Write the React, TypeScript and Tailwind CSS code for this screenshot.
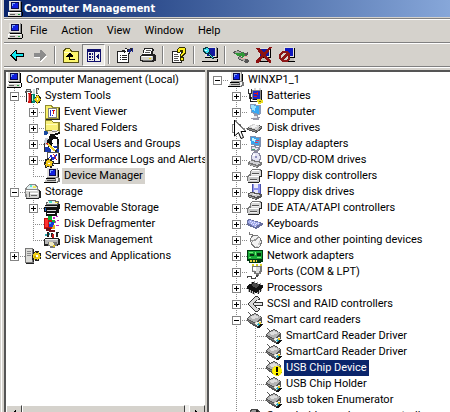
import React from 'react';

type Layer = [string, string];

// every icon is a stack of filled paths on a 16x16 grid
const icons: Record<string, Layer[]> = {
  computer: [
    ['#8c8c8c', 'M2 0h12v10h-12z'],
    ['#e4e2dc', 'M2 0h11v9h-11z'],
    ['#0a0a50', 'M4 1h8v7h-8z'],
    ['#1020e0', 'M5 2h6v5h-6z'],
    ['#7fa8ff', 'M5 2h3v1h-2v2h-1z'],
    ['#000', 'M14 1h1v9h-1zM3 10h12v1h1v4h-1v1h-14v-1h14v-4h-12z'],
    ['#d6d4ce', 'M1 11h13v4h-13z'],
    ['#fff', 'M1 11h13v1h-12v2h-1z'],
    ['#5c5c5c', 'M3 13h5v1h-5z'],
    ['#20a040', 'M11 13h2v1h-2z'],
  ],
  device: [
    ['#8c8c8c', 'M3 0h11v10h-11z'],
    ['#e4e2dc', 'M3 0h10v9h-10z'],
    ['#0a0a50', 'M5 1h7v7h-7z'],
    ['#1020e0', 'M6 2h5v5h-5z'],
    ['#7fa8ff', 'M6 2h3v1h-2v2h-1z'],
    ['#000', 'M14 2h1v8h-1zM2 10h12v1h-12zM0 14h12v1h-12z'],
    ['#c9c8c4', 'M2 11h11v1h-1v2h-11v-2h1z'],
    ['#555', 'M3 12h9v1h-9z'],
    ['#777', 'M12 9h3v1h1v4h-2v1h-2v-3h-1v-2h1z'],
    ['#f4f4f4', 'M12 10h2v3h-1v1h-1z'],
  ],
  tools: [
    ['#555', 'M1 1h5v2h1v2h-2v-1h-3v1h-2v-2h1zM11 0h3v2h-1v4h-2z'],
    ['#c8d8d8', 'M2 2h3v1h-3zM8 1h2v5h-2zM12 1h1v4h-1z'],
    ['#d21414', 'M3 5h3v10h-3z'],
    ['#ff9090', 'M3 6h1v7h-1z'],
    ['#008c78', 'M7 6h3v9h-3z'],
    ['#a0ffe0', 'M7 7h1v6h-1z'],
    ['#222', 'M1 5h1v9h-1zM6 6h1v9h-1zM11 7h3v1h1v1h1v4h-1v2h-4v-1h-1v-5h1z'],
    ['#e8cc10', 'M11 8h3v2h1v3h-1v1h-3v-1h-1v-3h1zM9 11h2v1h-2zM12 7h1v1h-1zM12 14h1v2h-1zM15 11h1v1h-1z'],
    ['#fff', 'M12 10h1v2h-1z'],
  ],
  events: [
    ['#8f8a30', 'M1 1h6l2 2h7v13h-15z'],
    ['#f8f06a', 'M2 2h5l1 2h6v10h-12z'],
    ['#222', 'M15 4h1v12h-14v-1h13z'],
    ['#808080', 'M4 4h9v10h-9z'],
    ['#fff', 'M5 5h7v8h-7z'],
    ['#2030d0', 'M6 6h1v6h-1zM8 6h1v1h-1zM8 11h1v1h-1z'],
    ['#e01010', 'M9 6h2v1h-1v3h-1z'],
  ],
  shared: [
    ['#8f8a30', 'M1 0h6l2 2h7v10h-15z'],
    ['#f8f078', 'M2 1h5l2 2h5v7h-12z'],
    ['#fffcb8', 'M2 4h11v1h-11z'],
    ['#1848a0', 'M0 11h3v4h-3zM3 12h3v2h-3z'],
    ['#111', 'M6 14h5v-1h3v-1h2v2h-2v1h-3v1h-5z'],
    ['#f0e8dc', 'M4 11h4v-1h5v1h2v1h-3v1h-3v1h-5z'],
    ['#888', 'M8 11h5v1h-5z'],
  ],
  users: [
    ['#111', 'M5 0h7v1h2v2h1v6h-2v-4h-3v3h-2v3h-4v-3h-1v-5h2z'],
    ['#fff', 'M9 3h4v4h-1v2h-3v-2h-1v-3h1z'],
    ['#c4ccd8', 'M1 2h3v2h-1v5h-3v-5h1z'],
    ['#333', 'M0 7h1v8h2v1h-3zM13 8h2v7h-2z'],
    ['#f2d32a', 'M2 7h2l7 6v2h-2z'],
    ['#d42a20', 'M2 7h2v2h-1z'],
    ['#1838b0', 'M1 11h3l3 3v2h-6zM9 10h4v2h-3zM12 13h3v3h-3z'],
    ['#222', 'M11 14h2v2h-2z'],
  ],
  perf: [
    ['#555', 'M3 0h12v12h-12z'],
    ['#fff', 'M4 1h10v10h-10z'],
    ['#2030d8', 'M5 6l2-4 2 4 3-4 1 1-4 6-2-4z'],
    ['#e02020', 'M9 2h1l3 6h-1z'],
    ['#222', 'M1 7h2v-1h2v1h2v-1h1v3h2v2h-1v2h1v1h-2v2h-2v-1h-3v1h-2v-3h-1z'],
    ['#f0c818', 'M3 8h2v-1h1v2h2v1h1v1h-1v3h-2v1h-1v-1h-2v1h-1v-2h-1v-1h1v-3h1z'],
    ['#fff', 'M4 11h2v1h-2z'],
    ['#111', 'M14 12h-4v-1h5v-10h1v11z'],
  ],
  storage: [
    ['#888', 'M4 0h6l3 2v5h-13v-3z'],
    ['#dfeeee', 'M4 1h5l3 2v3h-10v-2z'],
    ['#60e8d0', 'M5 1h2v2h-2z'],
    ['#f0ec60', 'M8 2h3v2h-3z'],
    ['#222', 'M14 6l2 2v6h-2v1h-13v-1h13z'],
    ['#888', 'M0 5h14v9h-13l-1-1z'],
    ['#d5d5d2', 'M1 6h11l2 2v5h-1v1h-11v-4h-1z'],
    ['#fff', 'M1 6h11v1h-11zM5 9h8v1h-8z'],
    ['#666', 'M6 11h6v1h-6zM4 8h1v5h-1z'],
  ],
  removable: [
    ['#666', 'M4 0h8v1h3v4h-13v-3h2z'],
    ['#e8f0e8', 'M4 1h7v1h2v2h-10v-1h1z'],
    ['#48dcc8', 'M5 1h3v2h-3z'],
    ['#f0e040', 'M11 2h3v1h-3z'],
    ['#111', 'M1 5h13v-1h2v5h-1v4h-2v3h-11v-4h-2v-5h1z'],
    ['#d0d0d0', 'M1 6h12v1h-12zM3 10h9v1h-9z'],
    ['#fff', 'M3 13h8v1h-8z'],
    ['#1060d0', 'M1 8h1v3h-1z'],
  ],
  defrag: [
    ['#c01010', 'M0 2h6l2 2v9h-8z'],
    ['#ff3030', 'M1 3h3v8h-3z'],
    ['#10b030', 'M4 0h4v4h-4zM8 4h3v3h-3z'],
    ['#1838d8', 'M5 6h5v5h-5z'],
    ['#30c8e8', 'M5 6h2v2h-2z'],
    ['#c020c0', 'M9 1h2v2h-2zM12 0h2v1h-2zM13 4h2v1h-2zM11 5h1v2h-1z'],
    ['#701018', 'M2 12h5v2h4v2h-6v-1h-3z'],
    ['#e0b020', 'M9 9h2v4h-3v-2h1z'],
    ['#c020c0', 'M12 9h3v1h-3z'],
  ],
  diskmgmt: [
    ['#222', 'M3 0h2v5h-2zM7 1h2v4h-2zM12 0h3v1h-1v4h-2z'],
    ['#c01818', 'M8 2h2v4h-2z'],
    ['#30a8b0', 'M1 2h2v2h-2zM5 1h1v2h-1z'],
    ['#222', 'M1 6h14v1h1v6h-2v1h-14v-7h1z'],
    ['#b8b8b8', 'M1 7h13v5h-13z'],
    ['#efefef', 'M1 7h13v1h-13z'],
    ['#777', 'M4 10h9v4h-2v2h-5v-2h-2z'],
    ['#f0eac0', 'M5 10h4v1h1v3h-4v-1h-1z'],
    ['#e0c020', 'M9 13h2v2h-2z'],
  ],
  services: [
    ['#777', 'M0 0h8v1h1v14h-9z'],
    ['#dcdcd8', 'M1 1h6v13h-6z'],
    ['#888', 'M2 3h4v1h-4zM2 5h4v1h-4zM2 7h4v1h-4z'],
    ['#222', 'M8 1h1v13h-1zM1 15h8v1h-8zM8 4h2v-1h4v2h2v6h-2v2h-4v-1h-3v-5h1z'],
    ['#f0d018', 'M9 5h1v-1h1v1h2v-1h1v2h1v2h1v1h-1v2h-2v1h-1v-1h-2v1h-1v-2h-1v-4h1z'],
    ['#fff', 'M11 7h2v2h-2z'],
    ['#c8a800', 'M9 8h2v2h-2z'],
  ],
  battery: [
    ['#333', 'M1 1h1v4h2v-4h1v5h-1v3h2v2h-4v-5h-1zM5 13h5v1h-5z'],
    ['#888', 'M5 2h10v10h-10z'],
    ['#1c28c8', 'M6 3h7v8h-7z'],
    ['#d8d8d8', 'M7 0h2v2h-2zM12 0h2v2h-2z'],
    ['#e01818', 'M7 5h3v1h-3zM10 4h1v3h-1zM7 8h3v1h-3z'],
    ['#111', 'M14 2h1v10h-9v-1h8zM3 9h1v4h2v1h-3z'],
    ['#eadc20', 'M10 11h4v1h2v3h-2v1h-3v-2h-1z'],
    ['#776c00', 'M12 13h2v1h-2z'],
  ],
  monitor: [
    ['#8899b8', 'M3 0l11 1v9l-2 1-8-2z'],
    ['#38a8f4', 'M4 1l8 1v8l-7-2z'],
    ['#9ee4ff', 'M4 1l5 1-1 5-3-1z'],
    ['#99a', 'M7 10h4v3h2v1h-1v2h-6v-1h-2v-1h3z'],
    ['#e8e8f0', 'M7 12h3v2h-4z'],
  ],
  disk: [
    ['#555', 'M0 8l6-4 9 2v3l-6 4-9-3z'],
    ['#d4d4d4', 'M1 7l5-3 8 2-5 4z'],
    ['#f4f4f4', 'M3 7l4-2 4 1-4 2z'],
    ['#888', 'M1 8l8 3v1l-8-3z'],
    ['#aaa', 'M10 9l4-2v1l-4 3z'],
  ],
  display: [
    ['#8090b0', 'M3 0l11 1v10l-10-2z'],
    ['#38a4ec', 'M4 1l8 1v7l-8-1z'],
    ['#c6f4ff', 'M5 2l4 1-1 3-3-1z'],
    ['#d43c64', 'M9 4h3v1h-3zM8 6h3v1h-3z'],
    ['#8c8c9c', 'M4 10l9 1v3l-3 2-6-1z'],
    ['#e4e4ee', 'M5 11l6 1-1 2-5-1z'],
    ['#38a070', 'M5 13h3v1h-3z'],
  ],
  dvd: [
    ['#8888a0', 'M6 0h5v1h2v2h1v5h-1v2h-8v-2h-1v-5h1v-2h1z'],
    ['#e4e4f4', 'M6 1h5v1h1v2h1v3h-1v2h-6v-2h-1v-4h1z'],
    ['#9090c0', 'M8 4h2v2h-2z'],
    ['#fff', 'M6 2h2v2h-2z'],
    ['#777', 'M1 10l4-2 10 2v3l-5 3-9-3z'],
    ['#d2d2d6', 'M1 10l4-1 9 2-4 2z'],
    ['#b0b0b0', 'M2 12l8 2v1l-8-2z'],
  ],
  controller: [
    ['#777', 'M5 1h8l1 1v7h-2v5h-11l-1-1v-5l3-2v-3z'],
    ['#222', 'M14 2l1 1v6h-2v4l-2 2h-10v-1h10l1-1v-5h2z'],
    ['#d8d8d8', 'M5 2h8v1h1v5h-10v-4z'],
    ['#fff', 'M5 2h7v1h-7zM2 8h10v1h-10z'],
    ['#c8c8c8', 'M1 9h11v5h-11z'],
    ['#555', 'M5 5h7v1h-7zM3 11h7v1h-7z'],
    ['#f0f0f0', 'M5 6h7v1h-7zM3 12h7v1h-7z'],
  ],
  floppy: [
    ['#4a50a8', 'M5 0h9v10h-9z'],
    ['#8c92ec', 'M6 0h7v9h-7z'],
    ['#e8e8f8', 'M7 0h4v4h-4zM7 6h4v4h-4z'],
    ['#555', 'M1 9l4-1 10 2v3l-6 3-8-3z'],
    ['#c8c8c8', 'M1 10l4-1 9 2-5 2z'],
    ['#eee', 'M6 10h3v1h-3z'],
    ['#999', 'M2 12l7 2v1l-7-2z'],
  ],
  keyboard: [
    ['#6870a0', 'M0 4l2-1 14 4v2l-7 4-9-4z'],
    ['#a4acec', 'M1 5l2-1 11 3-6 4-7-4z'],
    ['#e8ecff', 'M3 5h1v1h-1zM5 6h1v1h-1zM7 6h1v1h-1zM9 7h1v1h-1zM4 7h1v1h-1zM6 8h1v1h-1zM8 8h1v1h-1zM11 7h1v1h-1zM8 10h1v1h-1z'],
  ],
  mouse: [
    ['#777', 'M2 0h1v2h3v1h-4zM5 3h5l4 3 1 4-1 4-3 2h-4l-3-3-1-6z'],
    ['#f2f2f2', 'M6 4h4l3 3 1 3-1 3-2 2h-3l-3-3-1-5z'],
    ['#999', 'M4 8l5-1 2-3 1 1-2 3-5 2z'],
    ['#ccc', 'M12 9h1v4h-2v2h-2v-1h2z'],
  ],
  network: [
    ['#003810', 'M0 2h16v12h-2v1h-12v-2h-2z'],
    ['#18a838', 'M1 3h14v8h-14z'],
    ['#70f070', 'M2 4h4v1h-4zM8 4h1v3h-1zM2 9h2v1h-2zM10 9h4v1h-4z'],
    ['#083010', 'M3 6h4v2h-4zM10 5h4v3h-4z'],
    ['#e8d040', 'M3 12h7v2h-7z'],
    ['#0a4018', 'M5 12h1v2h-1zM8 12h1v2h-1z'],
  ],
  port: [
    ['#d8cc20', 'M5 0h2v2h-2zM9 0h2v2h-2zM13 0h2v2h-2z'],
    ['#777', 'M5 2h10v6h-1v2h-2v2h-3v-2h-2v-2h-2z'],
    ['#ddd', 'M6 3h7v4h-1v2h-3v-2h-3z'],
    ['#fff', 'M6 3h3v4h-1v-1h-2z'],
    ['#444', 'M9 11h2v2h-2v2h-5v-2h-3v1h-1v-2h5v2h3v-1h1z'],
  ],
  processor: [
    ['#111', 'M0 6l6-4 10 3v3l-7 5-9-4z'],
    ['#4a4a4a', 'M4 5l3-2 6 2-4 3z'],
    ['#bbb', 'M1 9h1v3h-1zM3 10h1v3h-1zM5 11h1v3h-1zM7 12h1v3h-1zM10 12h1v2h-1zM12 10h1v3h-1zM14 9h1v2h-1z'],
    ['#222', 'M2 10h1v2h-1zM4 11h1v2h-1zM6 12h1v2h-1zM11 11h1v3h-1zM13 10h1v2h-1z'],
    ['#999', 'M4 2h1v2h-1zM7 1h1v2h-1zM10 2h1v2h-1zM13 3h1v2h-1z'],
  ],
  scsi: [
    ['#333', 'M8 0h2l3 2v2h-2l-5 4 5 4h2v2l-3 2h-2l-8-8z'],
    ['#d8d8d8', 'M8 1h2l2 2-2 1-5 4 5 4 2 1-2 2h-2l-7-7z'],
    ['#333', 'M5 8l2-2h9v4h-9z'],
    ['#e4e4e4', 'M7 7h8v2h-8z'],
  ],
  reader: [
    ['#555', 'M1 0h1l2 3h-1zM4 3l4-2 7 4v5l-1 1 2 2-4 3-5-2-7-5v-3z'],
    ['#b4b4b4', 'M2 5l6-3 6 3-5 6-8-4z'],
    ['#dedede', 'M3 5l5-2 4 2-6 2z'],
    ['#808080', 'M1 8l8 4v1l-8-4z'],
    ['#f0f0e8', 'M9 10l5-1 1 3-4 3-3-3z'],
    ['#28a8c0', 'M9 12l3-1 1 2-2 1z'],
    ['#e8c820', 'M12 10h2v2h-2z'],
    ['#111', 'M14 12h2v1l-4 3h-2v-1z'],
  ],
  sound: [
    ['#444', 'M4 1h6l3 2 2 5v4h-13v-7z'],
    ['#999', 'M5 2h4l2 2v4h-7v-4z'],
    ['#222', 'M9 2h2v5h-2z'],
  ],
  back: [
    ['#000', 'M1 8l6-5h1v3h7v4h-7v4h-1l-6-5z'],
    ['#10e8f0', 'M2 8l5-4v3h7v2h-7v3z'],
  ],
  forward: [
    ['#fff', 'M15 9l-6 6h-1v-4h-6v-1h7v3l5-4z'],
    ['#8c8c8c', 'M14 8l-5-5h-1v3h-6v4h6v4h1z'],
  ],
  folderUp: [
    ['#555010', 'M0 4l2-3h5l2 3h7v12h-16z'],
    ['#fdf76c', 'M1 4l2-2h4l1 3h7v10h-14z'],
    ['#fffcc8', 'M1 5h7v1h-7z'],
    ['#000', 'M6 6h1l3 3v1h-3v2h5v1h-6v-3h-3v-1z'],
  ],
  panes: [
    ['#10106c', 'M1 2h14v13h-14z'],
    ['#f0efec', 'M2 5h6v9h-6zM9 5h5v9h-5z'],
    ['#10106c', 'M3 6h2v2h-2zM6 6h1v2h-1zM3 9h2v2h-2zM6 9h1v2h-1zM3 12h2v1h-2zM6 12h1v1h-1zM13 6v7l-3-3v-1z'],
  ],
  properties: [
    ['#222', 'M0 4h8v-3h2v1h3v-1h3v3h-3v3h-1v9h-12z'],
    ['#fff', 'M1 5h10v10h-10z'],
    ['#222', 'M3 8h1v1h-1zM5 8h5v1h-5zM3 10h1v1h-1zM5 10h5v1h-5zM3 12h1v1h-1zM5 12h5v1h-5zM5 3h3v3h-1v-1h-3z'],
    ['#fff', 'M8 2h2v3h2v1h-3z'],
    ['#1c2890', 'M12 2h2v3h-3v-2h1zM15 1h1v4h-1z'],
  ],
  print: [
    ['#222', 'M4 1h9v1h1l-1 5h2v1h1v6h-2v1h-12v-1h-2v-5l3-3z'],
    ['#fff', 'M5 2h7l-1 5h-8z'],
    ['#555', 'M6 3h5v1h-5zM5 5h5v1h-5z'],
    ['#d0cec8', 'M1 9h12v4h-12z'],
    ['#fff', 'M2 9h10v1h-10z'],
    ['#e8d800', 'M9 11h2v1h-2z'],
    ['#777', 'M3 13h9v1h-9z'],
  ],
  help: [
    ['#222', 'M1 4h10v12h-10z'],
    ['#fff', 'M2 5h8v10h-8z'],
    ['#555', 'M3 7h4v1h-4zM3 9h5v1h-5zM3 11h4v1h-4zM3 13h5v1h-5z'],
    ['#332f00', 'M6 2l2-2h5l2 1v5l-3 3v1h1v4h-4v-6l2-3h-2v1h-3z'],
    ['#fff01c', 'M7 2l2-1h4l1 1v3l-3 3v1h-1v-2l2-2v-2h-3v2h-2zM10 11h2v2h-2z'],
  ],
  scan: [
    ['#888', 'M3 0h12v11h-12z'],
    ['#e4e2dc', 'M3 0h11v10h-11z'],
    ['#1018a0', 'M5 1h8v8h-8z'],
    ['#000', 'M15 1h1v10h-12v1h12v3h-16v-1h14v-2h-11v-2h12z'],
    ['#d0cec8', 'M3 11h12v3h-14v-1z'],
    ['#083840', 'M1 1l3-1 3 1 1 3-1 2 5 5-1 2-6-6h-2l-2-3z'],
    ['#40e0f0', 'M2 2l3-1 2 2v2l-2 1-2-1-1-2zM7 7l4 4v1l-5-5z'],
    ['#d8ffff', 'M3 3h2v1h-2z'],
  ],
  enable: [
    ['#555', 'M0 5l5-2 7 3 3-1v2l-2 2-9-1-4-2zM4 11l3-2 9 4v2l-3 1-3-2-4-1z'],
    ['#a8a8a4', 'M1 5l4-1 7 3-2 1-6-1zM5 11l2-1 6 3-2 1z'],
    ['#309838', 'M2 6h7v-1l4 3-4 3v-2h-5z'],
    ['#e8b0a8', 'M11 9h4v1h-4zM8 11h5v1h-5z'],
  ],
  uninstall: [
    ['#e4e2dc', 'M3 1h11v9h-11z'],
    ['#1018a0', 'M4 2h9v7h-9z'],
    ['#000', 'M14 2h1v9h-12v-1h11zM1 14h14v1h-14z'],
    ['#c0beb8', 'M2 11h12v3h-12z'],
    ['#8c1010', 'M0 1h3l5 5 5-6h3l-6 8 5 6v2h-2l-6-6-4 6h-3v-2l5-6z'],
  ],
  disable: [
    ['#e4e2dc', 'M5 0h10v10h-10z'],
    ['#1018c0', 'M6 1h8v8h-8z'],
    ['#000', 'M15 1h1v10h-10v-1h9zM4 14h12v1h-12z'],
    ['#c0beb8', 'M4 11h11v3h-11z'],
    ['#8c1818', 'M3 4h5l3 3v5l-3 3h-5l-3-3v-5z'],
    ['#d8d4cc', 'M4 6h3l-5 5v-3zM9 8v3l-2 2h-3z'],
  ],
};

function Icon({ name, warn }: { name: string; warn?: boolean }) {
  return (
    <svg viewBox="0 0 16 16" className="size-4 shrink-0" shapeRendering="crispEdges" aria-hidden="true">
      {icons[name].map(([fill, d], i) => (
        <path key={i} fill={fill} d={d} />
      ))}
      {warn && (
        <g shapeRendering="auto">
          <circle cx="11" cy="11" r="5" fill="#fff200" />
          <path d="M10 7h2v5h-2zM10 13h2v2h-2z" fill="#000" />
        </g>
      )}
    </svg>
  );
}

/*
 * One 19px column of tree lines.
 *   |  line passing through      t  branch      l  last branch
 *   +  collapsed branch          -  expanded    L  collapsed, last    r  expanded root
 */
function Branch({ kind, label }: { kind: string; label: string }) {
  const top = kind !== 'r' && kind !== ' ';
  const bottom = '|t+-'.includes(kind);
  const arm = kind !== '|' && kind !== ' ';
  const box = '+-Lr'.includes(kind);
  const plus = kind === '+' || kind === 'L';

  const lines = (
    <svg viewBox="0 0 19 16" className="h-4 w-[19px]" shapeRendering="crispEdges" aria-hidden="true">
      <g stroke="#8a8a8a" strokeDasharray="1 1" fill="none">
        {top && <path d="M8.5 0v8" />}
        {bottom && <path d="M8.5 8v8" />}
        {arm && <path d="M8 8.5h11" />}
      </g>
      {box && (
        <>
          <path d="M4 4h9v9h-9z" fill="#848484" />
          <path d="M5 5h7v7h-7z" fill="#fff" />
          <path d={plus ? 'M6 8h5v1h-5zM8 6h1v5h-1z' : 'M6 8h5v1h-5z'} fill="#000" />
        </>
      )}
    </svg>
  );

  return box ? (
    <button type="button" aria-label={(plus ? 'Expand ' : 'Collapse ') + label} aria-expanded={!plus} className="shrink-0">
      {lines}
    </button>
  ) : (
    <span className="shrink-0">{lines}</span>
  );
}

type Row = { lines: string; icon: string; label: string; state?: 'inactive' | 'active'; warn?: boolean };

const consoleTree: Row[] = [
  { lines: '', icon: 'computer', label: 'Computer Management (Local)' },
  { lines: '-', icon: 'tools', label: 'System Tools' },
  { lines: '|+', icon: 'events', label: 'Event Viewer' },
  { lines: '|+', icon: 'shared', label: 'Shared Folders' },
  { lines: '|+', icon: 'users', label: 'Local Users and Groups' },
  { lines: '|+', icon: 'perf', label: 'Performance Logs and Alerts' },
  { lines: '|l', icon: 'device', label: 'Device Manager', state: 'inactive' },
  { lines: '-', icon: 'storage', label: 'Storage' },
  { lines: '|+', icon: 'removable', label: 'Removable Storage' },
  { lines: '|t', icon: 'defrag', label: 'Disk Defragmenter' },
  { lines: '|l', icon: 'diskmgmt', label: 'Disk Management' },
  { lines: 'L', icon: 'services', label: 'Services and Applications' },
];

const deviceTree: Row[] = [
  { lines: 'r', icon: 'device', label: 'WINXP1_1' },
  { lines: ' +', icon: 'battery', label: 'Batteries' },
  { lines: ' +', icon: 'monitor', label: 'Computer' },
  { lines: ' +', icon: 'disk', label: 'Disk drives' },
  { lines: ' +', icon: 'display', label: 'Display adapters' },
  { lines: ' +', icon: 'dvd', label: 'DVD/CD-ROM drives' },
  { lines: ' +', icon: 'controller', label: 'Floppy disk controllers' },
  { lines: ' +', icon: 'floppy', label: 'Floppy disk drives' },
  { lines: ' +', icon: 'controller', label: 'IDE ATA/ATAPI controllers' },
  { lines: ' +', icon: 'keyboard', label: 'Keyboards' },
  { lines: ' +', icon: 'mouse', label: 'Mice and other pointing devices' },
  { lines: ' +', icon: 'network', label: 'Network adapters' },
  { lines: ' +', icon: 'port', label: 'Ports (COM & LPT)' },
  { lines: ' +', icon: 'processor', label: 'Processors' },
  { lines: ' +', icon: 'scsi', label: 'SCSI and RAID controllers' },
  { lines: ' -', icon: 'reader', label: 'Smart card readers' },
  { lines: ' |t', icon: 'reader', label: 'SmartCard Reader Driver' },
  { lines: ' |t', icon: 'reader', label: 'SmartCard Reader Driver' },
  { lines: ' |t', icon: 'reader', label: 'USB Chip Device', state: 'active', warn: true },
  { lines: ' |t', icon: 'reader', label: 'USB Chip Holder' },
  { lines: ' |l', icon: 'reader', label: 'usb token Enumerator' },
  { lines: ' +', icon: 'sound', label: 'Sound, video and game controllers' },
];

function Tree({ rows, label }: { rows: Row[]; label: string }) {
  return (
    <ul role="tree" aria-label={label} className="min-h-0 flex-1 overflow-hidden">
      {rows.map((row, i) => (
        <li key={i} role="treeitem" aria-level={row.lines.length + 1} aria-selected={!!row.state} className="flex h-4 items-center">
          {row.lines.split('').map((kind, j) => (
            <Branch key={j} kind={kind} label={row.label} />
          ))}
          <Icon name={row.icon} warn={row.warn} />
          <span
            className={
              'ml-[2px] px-[2px] leading-4 whitespace-nowrap ' +
              (row.state === 'active' ? 'bg-[#0a246a] text-white' : row.state === 'inactive' ? 'bg-[#d5d2cc]' : '')
            }
          >
            {row.label}
          </span>
        </li>
      ))}
    </ul>
  );
}

const toolbar = [
  [['back', 'Back'], ['forward', 'Forward']],
  [['folderUp', 'Up One Level'], ['panes', 'Show/Hide Console Tree']],
  [['properties', 'Properties'], ['print', 'Print']],
  [['help', 'Help']],
  [['scan', 'Scan for hardware changes']],
  [['enable', 'Update Driver'], ['uninstall', 'Uninstall'], ['disable', 'Disable']],
];

function Toolbar() {
  return (
    <div role="toolbar" aria-label="Standard" className="flex h-6 items-center border-t border-b border-t-white border-b-[#808080] pl-px">
      {toolbar.map((group, i) => (
        <React.Fragment key={i}>
          {i > 0 && <span className="mx-[3px] h-[18px] w-[2px] border-l border-[#808080] bg-white" />}
          {group.map(([icon, title]) => (
            <button
              key={icon}
              type="button"
              aria-label={title}
              className={
                'flex h-[22px] w-[23px] shrink-0 items-center justify-center ' +
                (icon === 'panes' ? 'border border-[#808080] border-r-white border-b-white bg-[#ebe9e5]' : '')
              }
            >
              <Icon name={icon} />
            </button>
          ))}
        </React.Fragment>
      ))}
    </div>
  );
}

const raised = 'border border-t-white border-l-white border-r-[#404040] border-b-[#404040] bg-[#d5d2cc]';

// the lower part of the bar runs past the edge of the window
function ScrollBar() {
  return (
    <div className="-mb-[9px] flex h-4 shrink-0 bg-[#eeedea]">
      <button type="button" aria-label="Scroll left" className={`${raised} flex w-4 shrink-0 items-center justify-center`}>
        <svg viewBox="0 0 4 7" className="h-[7px] w-1" shapeRendering="crispEdges" aria-hidden="true">
          <path d="M4 0v7l-4-3.5z" />
        </svg>
      </button>
      <div className={`${raised} mr-1 flex-1`} />
      <button type="button" aria-label="Scroll right" className={`${raised} flex w-4 shrink-0 items-center justify-center`}>
        <svg viewBox="0 0 4 7" className="h-[7px] w-1" shapeRendering="crispEdges" aria-hidden="true">
          <path d="M0 0v7l4-3.5z" />
        </svg>
      </button>
    </div>
  );
}

export default function App() {
  return (
    <div className="relative flex h-screen overflow-hidden bg-[#d5d2cc] font-['Roboto','DejaVu_Sans_Condensed',sans-serif] text-[11px] text-black">
      <div className="mr-[2px] ml-px w-px shrink-0 bg-white" />
      <div className="flex min-w-0 flex-1 flex-col">
        <header className="flex h-[17px] shrink-0 items-center gap-px bg-linear-to-r from-[#0a246a] to-[#87a7d9] pl-[3px] text-white">
          <Icon name="computer" />
          <h1 className="font-['DejaVu_Sans_Condensed','DejaVu_Sans',sans-serif] leading-4 font-bold">Computer Management</h1>
        </header>

        <div className="mt-px shrink-0 border-t border-b border-t-[#808080] border-b-white">
          <nav aria-label="Menu" className="flex h-6 items-center border-t border-b border-t-white border-b-[#808080] pl-[3px]">
            <Icon name="computer" />
            {['File', 'Action', 'View', 'Window', 'Help'].map((item) => (
              <button key={item} type="button" className="px-[7px] leading-4">
                {item}
              </button>
            ))}
          </nav>
          <Toolbar />
        </div>

        <main className="mt-[2px] flex min-h-0 flex-1">
          <section className="flex w-[201px] shrink-0 flex-col overflow-hidden border-t-2 border-l-2 border-[#555] bg-white">
            <Tree rows={consoleTree} label="Console tree" />
            <ScrollBar />
          </section>
          <section className="ml-[2px] flex min-w-0 flex-1 flex-col border-t-2 border-l-2 border-[#555] bg-white">
            <Tree rows={deviceTree} label="Devices" />
          </section>
        </main>
      </div>

      {/* mouse pointer */}
      <svg viewBox="0 0 12 21" className="absolute top-[119px] left-[234px] h-[21px] w-3" aria-hidden="true">
        <path d="M.5 1v16l4-3.500 2.500 6 2.500-1-2.500-6h5z" fill="#fff" stroke="#000" />
      </svg>
    </div>
  );
}
